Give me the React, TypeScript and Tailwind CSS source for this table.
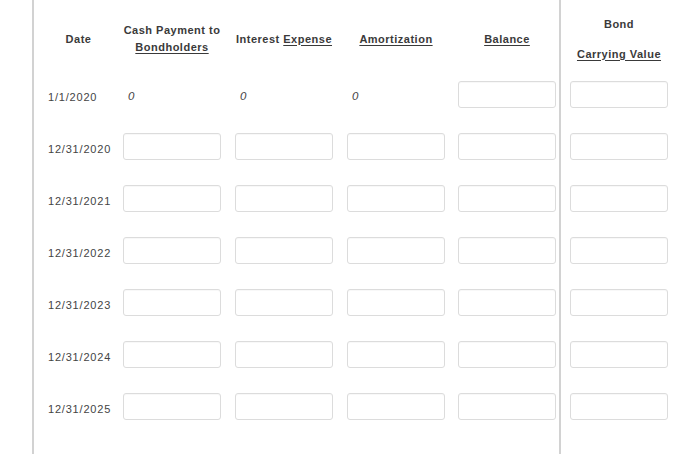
import React from "react";

const dates = ["12/31/2020", "12/31/2021", "12/31/2022", "12/31/2023", "12/31/2024", "12/31/2025"];
const widths = ["w-[112px]", "w-[112px]", "w-[111px]", "w-[101px]"];

function Box() {
  return <div className="w-[98px] h-[27px] rounded-[3px] border border-[#dcdcdc] bg-white shadow-[inset_0_1px_1px_rgba(0,0,0,0.03)]" />;
}

function Zero() {
  return (
    <div className="w-[98px] h-[27px] flex items-center pt-[5px] pl-[5px] italic text-[11.5px] text-[#444]">0</div>
  );
}

export default function App() {
  const font = { fontFamily: '"Liberation Sans", Arial, sans-serif' };
  return (
    <div className="w-[700px] h-[456px] bg-white flex pl-[32px]" style={font}>
      <div className="h-[454px] border-l-2 border-r-2 border-[#d2d2d2] flex flex-col">
        {/* header */}
        <div className="h-[78px] flex items-center text-[11px] font-bold text-[#3a3a3a] tracking-[0.5px] leading-[17px]">
          <div className="w-[89px] text-center">Date</div>
          <div className={`${widths[0]}`}>
            <div className="w-[98px] text-center">
              <div>Cash Payment to</div>
              <div><span className="underline underline-offset-2">Bondholders</span></div>
            </div>
          </div>
          <div className={`${widths[1]}`}>
            <div className="w-[98px] text-center whitespace-nowrap">
              Interest <span className="underline underline-offset-2">Expense</span>
            </div>
          </div>
          <div className={`${widths[2]}`}>
            <div className="w-[98px] text-center">
              <span className="underline underline-offset-2">Amortization</span>
            </div>
          </div>
          <div className={`${widths[3]}`}>
            <div className="w-[98px] text-center">
              <span className="underline underline-offset-2">Balance</span>
            </div>
          </div>
        </div>
        {/* first row */}
        <div className="h-[52px] flex items-start pt-[3px]">
          <div className="w-[89px] h-[27px] flex items-center pt-[5px] pl-[14px] text-[11px] tracking-[0.8px] text-[#444]">1/1/2020</div>
          <div className={widths[0]}><Zero /></div>
          <div className={widths[1]}><Zero /></div>
          <div className={widths[2]}><Zero /></div>
          <div className={widths[3]}><Box /></div>
        </div>
        {dates.map((d) => (
          <div key={d} className="h-[52px] flex items-start pt-[3px]">
            <div className="w-[89px] h-[27px] flex items-center pt-[5px] pl-[14px] text-[11px] tracking-[0.8px] text-[#444]">{d}</div>
            <div className={widths[0]}><Box /></div>
            <div className={widths[1]}><Box /></div>
            <div className={widths[2]}><Box /></div>
            <div className={widths[3]}><Box /></div>
          </div>
        ))}
      </div>
      <div className="h-[454px] flex flex-col pl-[9px]">
        <div className="h-[78px] flex items-center text-[11px] font-bold text-[#3a3a3a] tracking-[0.5px]">
          <div className="w-[98px] text-center">
            <div className="leading-[17px]">Bond</div>
            <div className="mt-[13px] leading-[17px]"><span className="underline underline-offset-2">Carrying Value</span></div>
          </div>
        </div>
        {[0, 1, 2, 3, 4, 5, 6].map((i) => (
          <div key={i} className="h-[52px] pt-[3px]"><Box /></div>
        ))}
      </div>
    </div>
  );
}
